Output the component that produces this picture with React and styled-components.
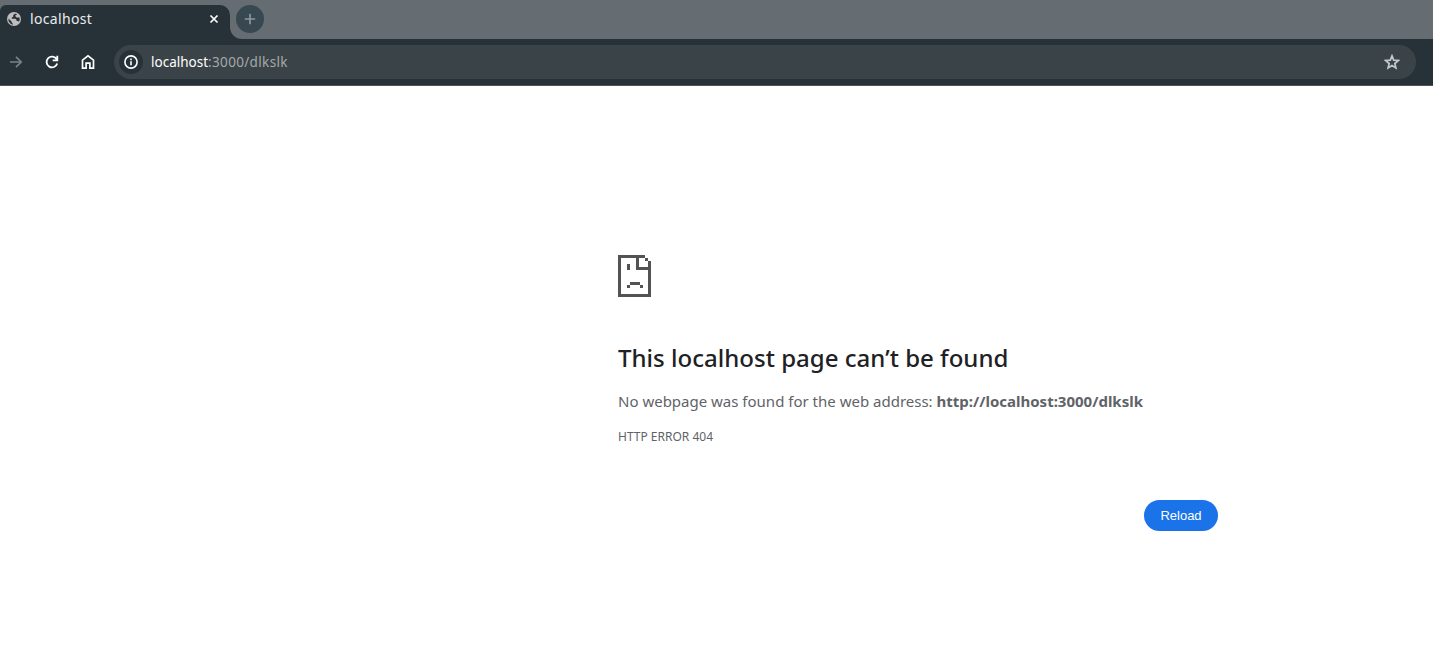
import React from 'react';
import styled, { createGlobalStyle } from 'styled-components';

const Global = createGlobalStyle`
  * { box-sizing: border-box; }
  body { margin: 0; background: #fff; font-family: "Noto Sans", sans-serif; overflow: hidden; }
  button { font: inherit; border: 0; padding: 0; }
`;

const Browser = styled.div`
  display: flex;
  flex-direction: column;
  height: 654px;
`;

const TabStrip = styled.div`
  display: flex;
  height: 39px;
  padding-top: 5px;
  background: #656d73;
`;

const Tab = styled.div`
  display: flex;
  align-items: center;
  width: 230px;
  height: 34px;
  padding: 0 10px 6px 7px;
  background: #273238;
  border-radius: 6px 10px 0 0;
  color: #e9ecee;
`;

const TabTitle = styled.span`
  flex: 1;
  margin-left: 9px;
  font-size: 14px;
  line-height: 20px;
  letter-spacing: 0.33px;
`;

const Flare = styled.svg`
  align-self: flex-end;
  display: block;
`;

const Icon = styled.svg`
  display: block;
  flex: none;
`;

const NewTab = styled.button`
  display: grid;
  place-items: center;
  width: 28px;
  height: 28px;
  margin-left: -6px;
  border-radius: 50%;
  background: #374850;
`;

const Toolbar = styled.div`
  display: flex;
  align-items: center;
  height: 47px;
  padding: 0 17px 1px 6px;
  background: #273238;
  border-bottom: 1px solid #4b555a;
`;

const NavButton = styled.button`
  display: grid;
  place-items: center;
  width: 20px;
  height: 20px;
  margin-right: 16px;
  background: none;
  color: ${(p) => (p.$dim ? '#7b8285' : '#fff')};
`;

const AddressBar = styled.div`
  display: flex;
  align-items: center;
  flex: 1;
  height: 34px;
  padding: 0 16px 0 5px;
  border-radius: 17px;
  background: #3a4448;
`;

const SiteInfo = styled.div`
  display: grid;
  place-items: center;
  width: 24px;
  height: 24px;
  border-radius: 50%;
  background: #273238;
`;

const Url = styled.div`
  flex: 1;
  margin-left: 8px;
  font-size: 13.5px;
  line-height: 20px;
  letter-spacing: 0.34px;
  color: #a4a9ab;
`;

const Host = styled.span`
  color: #fff;
  letter-spacing: 0;
`;

const Page = styled.main`
  width: 600px;
  margin: 169px 0 0 618px;
  color: #5f6368;
`;

const Heading = styled.h1`
  margin: 44px 0 0;
  font-size: 24px;
  font-weight: 500;
  line-height: 33px;
  letter-spacing: 0.02px;
  color: #202124;
`;

const Message = styled.p`
  margin: 15px 0 0;
  font-size: 15px;
  line-height: 24px;
`;

const ErrorCode = styled.div`
  margin-top: 15px;
  font-size: 12px;
  line-height: 18px;
`;

const Actions = styled.div`
  display: flex;
  justify-content: flex-end;
  margin-top: 54px;
`;

const ReloadButton = styled.button`
  width: 74px;
  height: 31px;
  border-radius: 16px;
  background: #1a73e8;
  color: #fff;
  font-family: "Liberation Sans", sans-serif;
  font-size: 13px;
`;

export default function App() {
  return (
    <Browser>
      <Global />
      <TabStrip>
        <Tab>
          <Icon width="14" height="14" viewBox="0 0 14 14">
            <circle cx="7" cy="7" r="7" fill="#bdbdbd" />
            <path d="M7.8 1.7 6.2 3.3v1.5L4.8 5.6v1.2h3.7l1.1 1.2v1h1.3l1.1.8A5.7 5.7 0 0 0 12.5 5.5H9.6L8.5 4.6V3.1h1.2V1.9zM1.4 6.5l3.4 3.2v1.1l1.1 1v.9A5.7 5.7 0 0 1 1.4 6.5z" fill="#273238" />
          </Icon>
          <TabTitle>localhost</TabTitle>
          <Icon width="12" height="12" viewBox="0 0 12 12" stroke="#fff" strokeWidth="1.7">
            <path d="m2.5 2.5 7 7m0-7-7 7" />
          </Icon>
        </Tab>
        <Flare width="12" height="12" viewBox="0 0 12 12">
          <path d="M0 0a12 12 0 0 0 12 12H0z" fill="#273238" />
        </Flare>
        <NewTab aria-label="New tab">
          <Icon width="12" height="12" viewBox="0 0 12 12" stroke="#8b969b" strokeWidth="1.7">
            <path d="M6 .8v10.4M.8 6h10.4" />
          </Icon>
        </NewTab>
      </TabStrip>
      <Toolbar>
        <NavButton $dim aria-label="Forward">
          <Icon width="20" height="20" viewBox="0 0 20 20" fill="none" stroke="currentColor" strokeWidth="1.7">
            <path d="M4 10h11M10 4.8l5.2 5.2-5.2 5.2" />
          </Icon>
        </NavButton>
        <NavButton aria-label="Reload page">
          <Icon width="20" height="20" viewBox="0 0 20 20" fill="none" stroke="currentColor" strokeWidth="1.8">
            <path d="M14.7 7.3A5.4 5.4 0 1 0 15.2 11.4M15.3 3.8v4.6h-4.6" />
          </Icon>
        </NavButton>
        <NavButton aria-label="Home">
          <Icon width="20" height="20" viewBox="0 0 20 20" fill="none" stroke="currentColor" strokeWidth="1.7">
            <path d="M4.5 16.2V8.1L10 3.8l5.5 4.3v8.1h-3.6v-5H8.1v5z" />
          </Icon>
        </NavButton>
        <AddressBar>
          <SiteInfo>
            <Icon width="14" height="14" viewBox="0 0 14 14" fill="none" stroke="#fff" strokeWidth="1.6">
              <circle cx="7" cy="7" r="6.1" />
              <path d="M7 6.2v4M7 3.6v1.6" />
            </Icon>
          </SiteInfo>
          <Url><Host>localhost</Host>:3000/dlkslk</Url>
          <Icon width="16" height="16" viewBox="0 0 16 16" fill="none" stroke="#c5c8c9" strokeWidth="1.7">
            <path d="m8 1.9 1.7 4.2 4.6.4-3.5 3 1.1 4.4L8 11.5l-3.9 2.4 1.1-4.4-3.5-3 4.6-.4z" />
          </Icon>
        </AddressBar>
      </Toolbar>
      <Page>
        <Icon width="33" height="42" viewBox="0 0 33 42" fill="#535353" shapeRendering="crispEdges">
          <path d="M0 0h27v3h-6v9h9V6h3v36H0zM3 3v36h27V15H18V3zM27 3h3v3h-3zM9 9h3v6H9zM12 27h10v3H12zM9 30h3v3H9zM22 30h3v3h-3z" fillRule="evenodd" />
        </Icon>
        <Heading>This localhost page can’t be found</Heading>
        <Message>No webpage was found for the web address: <strong>http://localhost:3000/dlkslk</strong></Message>
        <ErrorCode>HTTP ERROR 404</ErrorCode>
        <Actions><ReloadButton>Reload</ReloadButton></Actions>
      </Page>
    </Browser>
  );
}
